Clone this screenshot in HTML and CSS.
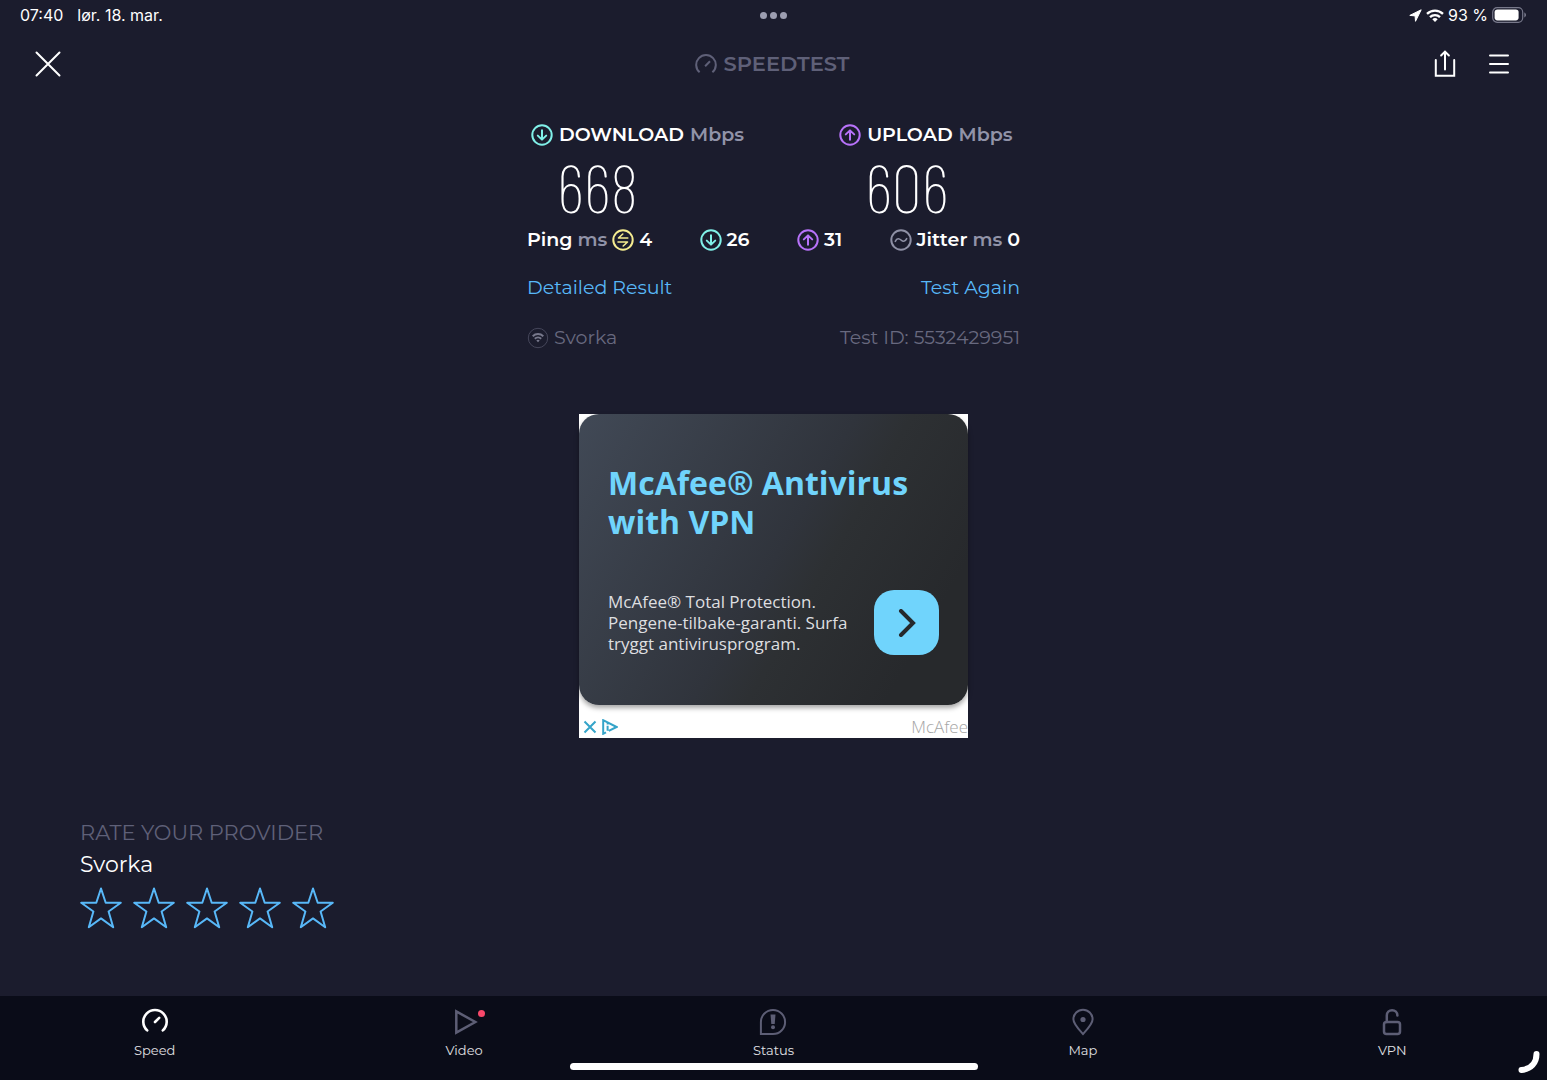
FILE: index.html
```html
<!DOCTYPE html>
<html lang="nb">
<head>
  <meta charset="UTF-8">
  <meta name="viewport" content="width=device-width, initial-scale=1">
  <title>Speedtest</title>
  <link rel="stylesheet" href="styles.css">
</head>
<body>
  <!-- shared icons -->
  <svg class="sprite" width="0" height="0" aria-hidden="true">
    <symbol id="icon-down" viewBox="0 0 22 22">
      <circle cx="11" cy="11" r="9.7"/>
      <path d="M11 6.3v9M6.8 11.6l4.2 4 4.2-4"/>
    </symbol>
    <symbol id="icon-up" viewBox="0 0 22 22">
      <circle cx="11" cy="11" r="9.7"/>
      <path d="M11 15.7v-9M6.8 10.4l4.2-4 4.2 4"/>
    </symbol>
    <symbol id="icon-star" viewBox="0 0 42 42">
      <path d="M21 1.5l4.7 14.3h15.1l-12.2 8.7 4.6 15.7L21 31.4 8.8 40.2l4.6-15.7L1.2 15.8h15.1z"/>
    </symbol>
  </svg>

  <div class="status_bar">
    <div class="status_left">
      <span>07:40</span>
      <span>lør. 18. mar.</span>
    </div>
    <div class="dots"><i></i><i></i><i></i></div>
    <div class="status_right">
      <svg width="13" height="13" viewBox="0 0 13 13"><path fill="#fff" stroke="#fff" stroke-linejoin="round" d="M12.2.8L.8 6.4l5.3.5.4 5.4z"/></svg>
      <svg width="18" height="13" viewBox="0 0 18 13">
        <g fill="none" stroke="#fff" stroke-width="2.3"><path d="M1 4.8a11.5 11.5 0 0 1 16 0"/><path d="M4 8.1a7.2 7.2 0 0 1 10 0"/></g>
        <path fill="#fff" d="M9 13L6.3 10.2a3.9 3.9 0 0 1 5.4 0z"/>
      </svg>
      <span>93 %</span>
      <svg width="35" height="16" viewBox="0 0 35 16">
        <rect x=".7" y=".7" width="30" height="14.6" rx="4.5" fill="none" stroke="#77788a" stroke-width="1.2"/>
        <rect x="2.6" y="2.6" width="24" height="10.8" rx="2.8" fill="#fff"/>
        <path fill="#77788a" d="M32.3 5.6c2.3.8 2.3 4 0 4.8z"/>
      </svg>
    </div>
  </div>

  <header class="header">
    <button class="icon_btn" type="button" aria-label="Close">
      <svg width="26" height="26" viewBox="0 0 26 26"><path d="M1.5 1.5l23 23M24.5 1.5l-23 23"/></svg>
    </button>
    <h1 class="logo">
      <svg width="22" height="20" viewBox="0 0 22 20"><path d="M4.6 18.3a9.8 9.8 0 1 1 12.8 0M10.1 12.2L15 7.3"/></svg>
      SPEEDTEST
    </h1>
    <div class="header_actions">
      <button class="icon_btn" type="button" aria-label="Share">
        <svg width="22" height="28" viewBox="0 0 22 28"><path d="M1.8 10v15.8h18.4V10M11 19.5V2M7.1 5.5L11 1.6l3.9 3.9"/></svg>
      </button>
      <button class="icon_btn" type="button" aria-label="Menu">
        <svg width="20" height="20" viewBox="0 0 20 20"><path d="M1 1.6h18M1 10h18M1 18.4h18"/></svg>
      </button>
    </div>
  </header>

  <main class="main">
    <section class="results">
      <div class="speeds">
        <div class="speed">
          <h2><svg class="icon down"><use href="#icon-down"/></svg>DOWNLOAD <small>Mbps</small></h2>
          <p class="value">668</p>
        </div>
        <div class="speed">
          <h2><svg class="icon up"><use href="#icon-up"/></svg>UPLOAD <small>Mbps</small></h2>
          <p class="value">606</p>
        </div>
      </div>

      <div class="pings">
        <span class="ping">Ping <small>ms</small>
          <svg class="icon idle" viewBox="0 0 22 22"><circle cx="11" cy="11" r="9.7"/><path stroke-width="1.6" d="M10.8 5L6.5 9h9.3M6 13h9.5l-4.3 4"/></svg>4</span>
        <span class="ping"><svg class="icon down"><use href="#icon-down"/></svg>26</span>
        <span class="ping"><svg class="icon up"><use href="#icon-up"/></svg>31</span>
        <span class="ping"><svg class="icon jitter" viewBox="0 0 22 22"><circle cx="11" cy="11" r="9.7"/><path stroke-width="1.6" d="M5.3 12.3c1.7-3.6 4-2.9 5.7-1.3s4 2.3 5.7-1.3"/></svg>Jitter <small>ms</small> 0</span>
      </div>

      <div class="row links">
        <a href="#detailed">Detailed Result</a>
        <a href="#again">Test Again</a>
      </div>

      <div class="row info">
        <span class="provider">
          <svg width="22" height="22" viewBox="0 0 22 22"><circle cx="11" cy="11" r="9.7"/><path class="waves" d="M5.7 9.2a7.8 7.8 0 0 1 10.6 0M7.8 11.7a4.7 4.7 0 0 1 6.4 0"/><path class="tip" d="M11 15.3l-1.7-1.7a2.4 2.4 0 0 1 3.4 0z"/></svg>
          Svorka
        </span>
        <span>Test ID: 5532429951</span>
      </div>
    </section>

    <aside class="ad">
      <div class="ad_card">
        <h2>McAfee® Antivirus with VPN</h2>
        <div class="ad_body">
          <p>McAfee® Total Protection. Pengene-tilbake-garanti. Surfa tryggt antivirusprogram.</p>
          <a class="ad_go" href="#ad" aria-label="McAfee">
            <svg width="18" height="28" viewBox="0 0 18 28"><path d="M3 2l12 12L3 26"/></svg>
          </a>
        </div>
      </div>
      <div class="ad_footer">
        <button type="button" aria-label="Close ad"><svg width="14" height="14" viewBox="0 0 14 14"><path d="M1.5 1.5l11 11M12.5 1.5l-11 11"/></svg></button>
        <button type="button" aria-label="Ad info"><svg width="16" height="16" viewBox="0 0 16 16"><path d="M4 13.4l-2.8 1.4V1.2L14.6 8l-7.8 3.9M5.6 6.8v5M5.6 4v1.5"/></svg></button>
        <span>McAfee</span>
      </div>
    </aside>

    <section class="rate">
      <h2>RATE YOUR PROVIDER</h2>
      <p>Svorka</p>
      <div class="stars">
        <button type="button" aria-label="1 star"><svg><use href="#icon-star"/></svg></button>
        <button type="button" aria-label="2 stars"><svg><use href="#icon-star"/></svg></button>
        <button type="button" aria-label="3 stars"><svg><use href="#icon-star"/></svg></button>
        <button type="button" aria-label="4 stars"><svg><use href="#icon-star"/></svg></button>
        <button type="button" aria-label="5 stars"><svg><use href="#icon-star"/></svg></button>
      </div>
    </section>
  </main>

  <nav class="tab_bar">
    <a class="active" href="#speed">
      <svg viewBox="0 0 28 28"><path stroke-width="2.6" d="M6.2 22.4a11.7 11.7 0 1 1 15.6 0M14 14l4.2-4.2"/></svg>
      Speed
    </a>
    <a class="video" href="#video">
      <svg viewBox="0 0 28 28"><path stroke-width="2.5" d="M6.3 3.4v21.2L25.3 14z"/></svg>
      Video
    </a>
    <a class="status" href="#status">
      <svg viewBox="0 0 28 28"><path d="M1.9 26.1V14A12.1 12.1 0 1 1 14 26.1z"/><path class="fill" d="M11.5 6.5h5l-.8 9.5h-3.4z"/><circle class="fill" cx="14" cy="19.2" r="2"/></svg>
      Status
    </a>
    <a class="map" href="#map">
      <svg viewBox="0 0 28 28"><path d="M14 26C9 20.5 4.4 16 4.4 11.3a9.6 9.6 0 0 1 19.2 0C23.6 16 19 20.5 14 26z"/><circle class="fill" cx="14" cy="11.5" r="2.6"/></svg>
      Map
    </a>
    <a class="vpn" href="#vpn">
      <svg viewBox="0 0 28 28"><g stroke-width="2.5" stroke-linecap="round"><rect x="6" y="14" width="16" height="12" rx="2.5"/><path d="M8.8 14V7.5a5.3 5.3 0 0 1 10.6 0"/></g></svg>
      VPN
    </a>
    <div class="home_bar"></div>
    <svg class="corner" width="24" height="24" viewBox="0 0 24 24"><path d="M19.5 4C19.5 13 14 19 4.5 20"/></svg>
  </nav>
</body>
</html>
```
FILE: styles.css
```css
* { box-sizing: border-box; }

body {
  display: flex;
  flex-direction: column;
  min-height: 100vh;
  margin: 0;
  background: #1b1c2d;
  color: #fff;
  font-family: Montserrat, Inter, sans-serif;
  font-size: 19px;
  line-height: 28px;
}

h1, h2, p { margin: 0; }
a { text-decoration: none; }
svg {
  display: block;
  flex: none;
  fill: none;
}
button {
  display: block;
  margin: 0;
  padding: 0;
  border: 0;
  background: none;
  cursor: pointer;
}
.sprite { position: absolute; }

/* status bar */
.status_bar {
  display: grid;
  grid-template-columns: 1fr auto 1fr;
  align-items: center;
  height: 32px;
  padding: 0 20px 2px;
  font-family: Inter, sans-serif;
  font-size: 16px;
}
  .status_left {
    display: flex;
    gap: 14px;
  }
  .dots {
    display: flex;
    gap: 3px;
  }
  .dots i {
    width: 7px;
    height: 7px;
    border-radius: 50%;
    background: #9c9db0;
  }
  .status_right {
    display: flex;
    justify-content: flex-end;
    align-items: center;
    gap: 4px;
  }

/* header */
.header {
  display: grid;
  grid-template-columns: 1fr auto 1fr;
  align-items: center;
  height: 64px;
  padding: 0 38px 0 35px;
}
  .icon_btn svg {
    stroke: #fff;
    stroke-width: 2;
    stroke-linecap: round;
  }
  .header_actions {
    display: flex;
    justify-content: flex-end;
    align-items: center;
    gap: 33px;
  }
  .logo {
    display: flex;
    align-items: center;
    gap: 7px;
    color: #5f6078;
    font-size: 21px;
    font-weight: 600;
  }
  .logo svg {
    stroke: #5f6078;
    stroke-width: 2;
  }

.main {
  display: flex;
  flex: 1;
  flex-direction: column;
  align-items: center;
  padding-top: 25px;
}

/* results */
.results { width: 493px; }
  .speeds {
    display: grid;
    grid-template-columns: 5fr 3fr;
  }
  .speed { padding-left: 4px; }
  .speed h2 {
    display: flex;
    gap: 6px;
    font-size: 19px;
    font-weight: 600;
    white-space: nowrap;
  }
  .results small {
    color: #9193a8;
    font-size: inherit;
  }
  .value {
    padding: 0 0 2px 26px;
    font-family: "Barlow Condensed", "Roboto Condensed", Roboto, sans-serif;
    font-size: 68px;
    font-weight: 200;
    line-height: 75px;
  }
  .icon {
    width: 22px;
    height: 22px;
    margin-top: 3px;
    stroke-width: 2;
    stroke-linecap: round;
    stroke-linejoin: round;
  }
  .down { stroke: #80f0e8; }
  .up { stroke: #b872fa; }
  .idle { stroke: #f5ec90; }
  .jitter { stroke: #8e90a5; }
  .pings {
    display: flex;
    justify-content: space-between;
  }
  .ping {
    display: flex;
    gap: 5px;
    font-weight: 600;
  }
  .row {
    display: flex;
    justify-content: space-between;
  }
  .links { margin-top: 20px; }
  .links a { color: #58b8f8; }
  .info {
    margin-top: 22px;
    color: #68697f;
  }
  .provider {
    display: flex;
    align-items: center;
    gap: 5px;
  }
  .provider circle { stroke: #45465a; }
  .provider .waves {
    stroke: #77788c;
    stroke-width: 2;
  }
  .provider .tip { fill: #77788c; }

/* ad */
.ad {
  width: 389px;
  margin-top: 62px;
  background: #fff;
  font-family: "Open Sans", sans-serif;
}
  .ad_card {
    padding: 49px 29px 50px;
    border-radius: 20px;
    background: linear-gradient(120deg, #414956 0%, #30343c 50%, #2d3033 60%, #27292c 85%);
    box-shadow: 0 3px 5px rgba(0, 0, 0, .35);
  }
  .ad_card h2 {
    color: #70d4fc;
    font-size: 32px;
    font-weight: 700;
    line-height: 39px;
  }
  .ad_body {
    display: flex;
    justify-content: space-between;
    align-items: center;
    margin-top: 49px;
  }
  .ad_body p {
    width: 245px;
    color: #dedfe0;
    font-size: 17px;
    line-height: 21px;
  }
  .ad_go {
    display: flex;
    flex: none;
    justify-content: center;
    align-items: center;
    width: 65px;
    height: 65px;
    border-radius: 20px;
    background: #70d4fc;
  }
  .ad_go svg {
    stroke: #26282b;
    stroke-width: 4;
    stroke-linecap: round;
  }
  .ad_footer {
    display: flex;
    align-items: center;
    gap: 5px;
    height: 33px;
    padding: 10px 0 0 4px;
  }
  .ad_footer svg {
    stroke: #35a4c9;
    stroke-width: 2;
  }
  .ad_footer span {
    margin-left: auto;
    color: #a5a5a5;
    font-size: 17px;
    font-weight: 300;
    line-height: 22px;
  }

/* rating */
.rate {
  align-self: flex-start;
  margin: 79px 0 66px 80px;
  font-size: 22px;
  line-height: 32px;
}
  .rate h2 {
    color: #5f6078;
    font-size: 21px;
    font-weight: 400;
  }
  .stars {
    display: flex;
    gap: 11px;
    margin-top: 6px;
  }
  .stars svg {
    width: 42px;
    height: 42px;
    stroke: #58b8f8;
    stroke-width: 2;
    stroke-linejoin: round;
  }

/* tab bar */
.tab_bar {
  position: relative;
  display: grid;
  grid-template-columns: repeat(5, 1fr);
  height: 84px;
  padding-top: 12px;
  background: #0a0c18;
}
  .tab_bar a {
    display: flex;
    flex-direction: column;
    align-items: center;
    gap: 4px;
    color: #e0e0e4;
    font-size: 13px;
    line-height: 20px;
  }
  .tab_bar a svg {
    width: 28px;
    height: 28px;
    stroke: #5d5e75;
    stroke-width: 2;
  }
  .tab_bar .fill {
    fill: #5d5e75;
    stroke: none;
  }
  .tab_bar .active svg {
    stroke: #fff;
    stroke-linecap: round;
  }
  .tab_bar .video { position: relative; }
  .video::after {
    content: "";
    position: absolute;
    top: 2px;
    left: calc(50% + 14px);
    width: 7px;
    height: 7px;
    border-radius: 50%;
    background: #f9486a;
  }
  .home_bar {
    position: absolute;
    bottom: 10px;
    left: 50%;
    width: 408px;
    height: 7px;
    margin-left: -204px;
    border-radius: 4px;
    background: #fff;
  }
  .corner {
    position: absolute;
    right: 6px;
    bottom: 6px;
    stroke: #fff;
    stroke-width: 6;
    stroke-linecap: round;
  }
```
